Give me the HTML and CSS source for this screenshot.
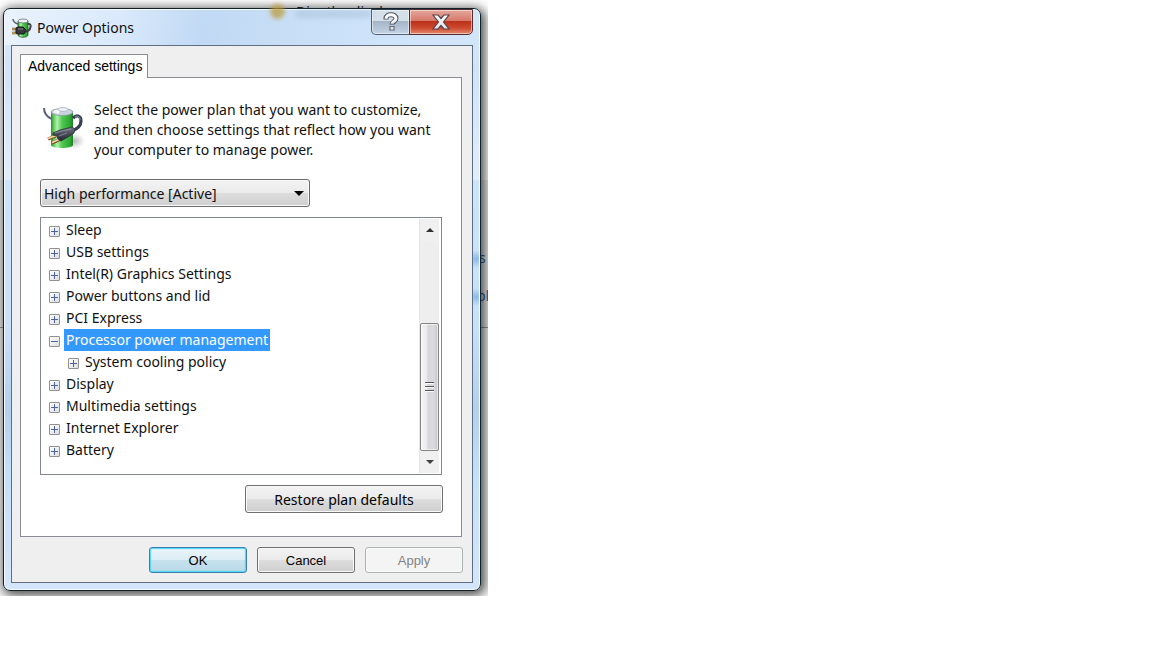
FILE: index.html
```html
<!DOCTYPE html>
<html lang="en">
<head>
<meta charset="utf-8">
<title>Power Options</title>
<link rel="stylesheet" href="styles.css">
</head>
<body>
<svg class="sprites" aria-hidden="true">
  <defs>
    <linearGradient id="green" x1="0" x2="1" y1="0" y2="0">
      <stop offset="0" stop-color="#278a2b"/><stop offset=".12" stop-color="#5ecb5b"/><stop offset=".28" stop-color="#b4f2ae"/><stop offset=".5" stop-color="#4fc94f"/><stop offset=".85" stop-color="#2fa834"/><stop offset="1" stop-color="#1f7d27"/>
    </linearGradient>
    <linearGradient id="plug" x1="0" x2="0" y1="0" y2="1">
      <stop offset="0" stop-color="#777b88"/><stop offset=".5" stop-color="#474a55"/><stop offset="1" stop-color="#25272e"/>
    </linearGradient>
    <linearGradient id="glyph" x1="0" x2="0" y1="0" y2="1">
      <stop offset="0" stop-color="#fff"/><stop offset="1" stop-color="#e2e2e2"/>
    </linearGradient>
    <radialGradient id="shade"><stop offset="0" stop-color="#888" stop-opacity=".6"/><stop offset="1" stop-color="#999" stop-opacity="0"/></radialGradient>
    <symbol id="battery" viewBox="0 0 44 46">
      <ellipse cx="32" cy="36" rx="11" ry="8" fill="url(#shade)"/>
      <path d="M2 3c0 5 3 9 8 11" fill="none" stroke="#5a6076" stroke-width="2"/>
      <path d="M9 6v34c0 4 22 4 22 0V6z" fill="url(#green)"/>
      <ellipse cx="20" cy="7" rx="11" ry="3.500" fill="#c9d3df" stroke="#8f9aa6" stroke-width=".8"/>
      <path d="M11 7c2-3 6-3 8-2l-3 4z" fill="#fff"/>
      <ellipse cx="21" cy="4.500" rx="5" ry="2" fill="#edf2fa" stroke="#9aa5b5" stroke-width=".7"/>
      <path d="M31 13c4-4 8-2 8 3 0 5-4 8-9 10" fill="none" stroke="#3b3f52" stroke-width="3.200"/>
      <path d="M33 12c3-2 5 0 5 3" fill="none" stroke="#8e96ac"/>
      <path d="M14 31l-8 3M19 34l-9 4" stroke="#7d5728" stroke-width="3.400"/>
      <path d="M14 30.500l-8 3M19 33.500l-9 4" stroke="#f6d3a2" stroke-width="1.800"/>
      <path d="M11 28l7-3 12-3 3 2-1 4-6 4-7 4-3-2-1-3-4-1z" fill="url(#plug)" stroke="#2c2f3a" stroke-width=".8"/>
      <path d="M13 28l7-2 9-2M17 31l8-3" fill="none" stroke="#9498a6" stroke-width=".8"/>
    </symbol>
    <symbol id="battery-small" viewBox="0 0 20 20">
      <path d="M1 1c0 3 2 4 5 5" fill="none" stroke="#5d6270" stroke-width="1.500"/>
      <path d="M6 3v14c0 3 10 3 10 0V3z" fill="url(#green)" stroke="#315a34" stroke-width=".8"/>
      <ellipse cx="11" cy="3" rx="5" ry="2" fill="#edf2f4" stroke="#6a7478" stroke-width=".8"/>
      <path d="M16 6c4-1 3 5 0 7l-4 1" fill="none" stroke="#3d4240" stroke-width="2"/>
      <path d="M0 11h5M0 15h5" stroke="#765c28" stroke-width="2.500"/>
      <path d="M0 11h5M0 15h5" stroke="#e5c46e"/>
      <path d="M4 10l2-1h5l3 3-2 4H6l-2-1z" fill="#37393d" stroke="#15171a"/>
      <path d="M6 11h5" stroke="#85888d"/>
    </symbol>
  </defs>
</svg>
<div class="desktop">
  <div class="behind" aria-hidden="true">
    <span class="behind-top">Dim the display</span>
    <span class="behind-s">s</span>
    <span class="behind-pl">pl</span>
    <i class="behind-line"></i>
  </div>
  <main class="window">
    <header class="titlebar">
      <svg class="title-icon"><use href="#battery-small"/></svg>
      <h1 class="title">Power Options</h1>
      <div class="captions">
        <button class="caption help" type="button" aria-label="Help">
          <svg width="16" height="20" viewBox="0 0 16 20"><path d="M3 7.500v-1C3 1.500 13 1.500 13 6.500c0 3-4 3-4 6M9 14v4.500" fill="none" stroke="#4c5561" stroke-width="5"/><path d="M3 6.800C3 1.500 13 1.500 13 6.500c0 3-4 3-4 5.300M9 14.800v3" fill="none" stroke="url(#glyph)" stroke-width="3"/></svg>
        </button>
        <button class="caption close" type="button" aria-label="Close">
          <svg width="20" height="18" viewBox="0 0 20 18"><path d="M2 2h5l3 3.500L13 2h5l-5.500 7 5.500 7h-5l-3-3.500L7 16H2l5.500-7z" fill="url(#glyph)" stroke="#584650" stroke-width="1.200"/></svg>
        </button>
      </div>
      <i class="glow-dot"></i><i class="glow-text"></i>
    </header>
    <div class="client">
      <div class="tabs" role="tablist"><button class="tab" type="button" role="tab" aria-selected="true">Advanced settings</button></div>
      <section class="panel">
        <div class="intro">
          <svg class="intro-icon"><use href="#battery"/></svg>
          <p class="intro-text">Select the power plan that you want to customize, and then choose settings that reflect how you want your computer to manage power.</p>
        </div>
        <div class="plan">
          <select class="plan-select" aria-label="Power plan"><option>High performance [Active]</option></select>
          <svg class="plan-arrow" width="10" height="6" viewBox="0 0 10 6"><path d="M0 0h10L5 5z"/></svg>
        </div>
        <div class="tree-box">
          <ul class="tree">
            <li class="row"><button class="toggle plus" type="button" aria-label="Expand Sleep"></button><span class="label">Sleep</span></li>
            <li class="row"><button class="toggle plus" type="button" aria-label="Expand USB settings"></button><span class="label">USB settings</span></li>
            <li class="row"><button class="toggle plus" type="button" aria-label="Expand Intel(R) Graphics Settings"></button><span class="label">Intel(R) Graphics Settings</span></li>
            <li class="row"><button class="toggle plus" type="button" aria-label="Expand Power buttons and lid"></button><span class="label">Power buttons and lid</span></li>
            <li class="row"><button class="toggle plus" type="button" aria-label="Expand PCI Express"></button><span class="label">PCI Express</span></li>
            <li class="row"><button class="toggle" type="button" aria-label="Collapse Processor power management"></button><span class="label selected">Processor power management</span></li>
            <li class="row child"><button class="toggle plus" type="button" aria-label="Expand System cooling policy"></button><span class="label">System cooling policy</span></li>
            <li class="row"><button class="toggle plus" type="button" aria-label="Expand Display"></button><span class="label">Display</span></li>
            <li class="row"><button class="toggle plus" type="button" aria-label="Expand Multimedia settings"></button><span class="label">Multimedia settings</span></li>
            <li class="row"><button class="toggle plus" type="button" aria-label="Expand Internet Explorer"></button><span class="label">Internet Explorer</span></li>
            <li class="row"><button class="toggle plus" type="button" aria-label="Expand Battery"></button><span class="label">Battery</span></li>
          </ul>
          <div class="scrollbar">
            <button class="scroll-btn" type="button" aria-label="Scroll up"><svg width="8" height="4" viewBox="0 0 8 4"><path d="M0 4h8L4 0z" fill="#303030"/></svg></button>
            <div class="track"><div class="thumb"><i class="grip"></i><i class="grip"></i><i class="grip"></i></div></div>
            <button class="scroll-btn" type="button" aria-label="Scroll down"><svg width="8" height="4" viewBox="0 0 8 4"><path d="M0 0h8L4 4z" fill="#404040"/></svg></button>
          </div>
        </div>
        <div class="restore-row"><button class="btn restore" type="button">Restore plan defaults</button></div>
      </section>
      <footer class="actions">
        <button class="btn ok" type="button">OK</button>
        <button class="btn" type="button">Cancel</button>
        <button class="btn" type="button" disabled>Apply</button>
      </footer>
    </div>
  </main>
</div>
</body>
</html>
```
FILE: styles.css
```css
* { box-sizing: border-box; }
body {
  margin: 0;
  background: #fff;
  color: #111;
  font-family: "Noto Sans", "Open Sans", sans-serif;
  font-size: 14px;
}
button, select { font: inherit; color: inherit; margin: 0; padding: 0; }
.sprites { position: absolute; width: 0; height: 0; }

.desktop {
  position: relative;
  max-width: 488px;
  padding: 8px 7px 5px 3px;
  overflow: hidden;
  background: linear-gradient(#fff 0 180px, #f0f0f0 180px 327px, #f6f6f6 327px);
}
.behind span, .behind i { position: absolute; }
.behind-top { left: 296px; top: 3px; font-size: 14px; line-height: 18px; color: #222; }
.behind-s { left: 479px; top: 248px; color: #1b6ab6; }
.behind-pl { left: 477px; top: 286px; color: #1b6ab6; }
.behind-line { left: 0; right: 0; top: 327px; height: 1px; background: #999; }

.window {
  position: relative;
  padding: 0 7px 7px;
  border: 1px solid #10202a;
  border-radius: 7px;
  background:
    radial-gradient(ellipse 8px 9px at 472px 250px, #86b8ec, transparent),
    radial-gradient(ellipse 8px 9px at 472px 288px, #86b8ec, transparent),
    linear-gradient(180deg, #dcebfb 0, #cfe3fb 60px, #e0eefb 170px, #cbe3fd 172px, #c9e2fc 310px, #b4d0ee 400px, #c4e0fa 470px, #d5e6fb 583px);
  box-shadow: inset 0 0 0 1px #f4faff, 2px 2px 11px 2px rgba(0, 0, 0, .7);
}
.titlebar {
  position: relative;
  display: flex;
  align-items: center;
  height: 35px;
  background: linear-gradient(100deg, #e9f2fc 0, #d9e9fb 25%, #c0d9f4 42%, #c8def6 60%, #cfe4fb 80%, #d3e5f9 100%);
  margin: 1px -6px 0;
  padding-left: 7px;
  border-radius: 6px 6px 0 0;
}
.title-icon { width: 20px; height: 20px; }
.title { margin: 0 auto 0 5px; font-size: 14px; font-weight: 400; line-height: 20px; }
.captions { display: flex; align-self: flex-start; height: 26px; margin: -1px 6px 0 0; }
.caption {
  display: flex;
  align-items: center;
  justify-content: center;
  border: 1px solid #55606e;
  border-top-color: #2d3b48;
  box-shadow: inset 0 0 0 1px rgba(255, 255, 255, .5);
}
.help { width: 39px; border-radius: 0 0 0 5px; background: linear-gradient(#d5dfe9 0 45%, #a4b4c6 46%, #c3d4e6); }
.close { width: 64px; margin-left: -1px; border-color: #552c30; border-radius: 0 0 5px 0; background: linear-gradient(#e5a79c 0, #d6796a 45%, #bb2f19 46%, #cc4a2f 75%, #e58b6e); }
.glow-dot { position: absolute; left: 265px; top: -6px; width: 15px; height: 15px; border-radius: 50%; background: #bd9a35; filter: blur(2px); opacity: .7; }
.glow-text { position: absolute; left: 291px; top: 1px; width: 76px; height: 6px; background: #7590ad; filter: blur(3px); opacity: .3; }

.client { padding: 8px 9px 9px 8px; border: 1px solid #5f6f80; background: #efefef; }
.tabs { position: relative; z-index: 1; display: flex; }
.tab {
  height: 24px;
  padding: 0 5px 2px 7px;
  border: 1px solid #8a8d96;
  border-bottom: 0;
  background: #fff;
  font: 14px/20px "Liberation Sans", Arial, sans-serif;
  color: #000;
}
.panel { margin: -1px 1px 0 0; padding: 22px 19px 23px; border: 1px solid #8a8d96; background: #fff; }
.intro { display: flex; gap: 8px; margin-left: 2px; }
.intro-icon { flex: none; width: 44px; height: 46px; margin-top: 5px; }
.intro-text { flex: 1; margin: 0; line-height: 20px; }

.plan { position: relative; max-width: 270px; margin-top: 19px; }
.plan-select {
  display: block;
  appearance: none;
  width: 100%;
  height: 28px;
  padding: 0 24px 0 3px;
  border: 1px solid #6c6c6c;
  border-radius: 3px;
  background: linear-gradient(#f3f3f3 0, #ebebeb 48%, #dddddd 50%, #cfcfcf);
  box-shadow: inset 0 0 0 1px #fafafa;
}
.plan-arrow { position: absolute; right: 6px; top: 12px; pointer-events: none; }

.tree-box { display: flex; margin-top: 10px; border: 1px solid #828790; }
.tree { flex: 1; margin: 0; padding: 1px 0 13px 8px; list-style: none; }
.row { display: flex; align-items: center; height: 22px; }
.child { padding-left: 19px; }
.toggle {
  flex: none;
  width: 11px;
  height: 11px;
  margin-top: 2px;
  border: 1px solid #919191;
  border-radius: 1px;
  background: linear-gradient(#4b63a7, #4b63a7) center / 7px 1px no-repeat, linear-gradient(135deg, #fff, #ddd);
}
.plus { background: linear-gradient(#4b63a7, #4b63a7) center / 7px 1px no-repeat, linear-gradient(#4b63a7, #4b63a7) center / 1px 7px no-repeat, linear-gradient(135deg, #fff, #ddd); }
.label { margin-left: 4px; padding: 0 2px; line-height: 22px; }
.selected { background: #3399ff; color: #fff; }

.scrollbar { display: flex; flex-direction: column; width: 20px; margin: 1px 2px 1px 0; background: #eee; border-left: 1px solid #e4e4e4; }
.scroll-btn { display: flex; align-items: center; justify-content: center; height: 22px; border: 0; background: #f0f0f0; }
.track { flex: 1; display: flex; flex-direction: column; justify-content: flex-end; }
.thumb {
  display: flex;
  flex-direction: column;
  align-items: center;
  justify-content: center;
  gap: 2px;
  height: 61%;
  border: 1px solid #858585;
  border-radius: 2px;
  background: linear-gradient(90deg, #f6f6f6, #e9e9eb 35%, #d6d7da 40%, #dadbde 75%, #c4c4c8);
  box-shadow: inset 0 0 0 1px rgba(255, 255, 255, .6);
}
.grip { width: 9px; height: 2px; background: linear-gradient(#555 50%, #fff 50%); }

.restore-row { display: flex; justify-content: flex-end; margin: 10px -1px 0 0; }
.btn {
  width: 98px;
  height: 26px;
  border: 1px solid #707070;
  border-radius: 3px;
  background: linear-gradient(#f3f3f3 0, #ebebeb 48%, #dddddd 50%, #cfcfcf);
  box-shadow: inset 0 0 0 1px #fafafa;
  font: 13px "Liberation Sans", Arial, sans-serif;
  color: #000;
}
.restore { width: 198px; height: 28px; font: 14px "Noto Sans", "Open Sans", sans-serif; }
.ok { border-color: #3c7fb1; background: linear-gradient(#eaf5fa 0, #dceef6 48%, #c6e2ee 50%, #b9d9e8); box-shadow: inset 0 0 1px 1px #48d8fb; }
.btn:disabled { border-color: #adb2b5; background: #f4f4f4; color: #838383; }
.actions { display: flex; justify-content: flex-end; gap: 10px; margin-top: 10px; }
```
